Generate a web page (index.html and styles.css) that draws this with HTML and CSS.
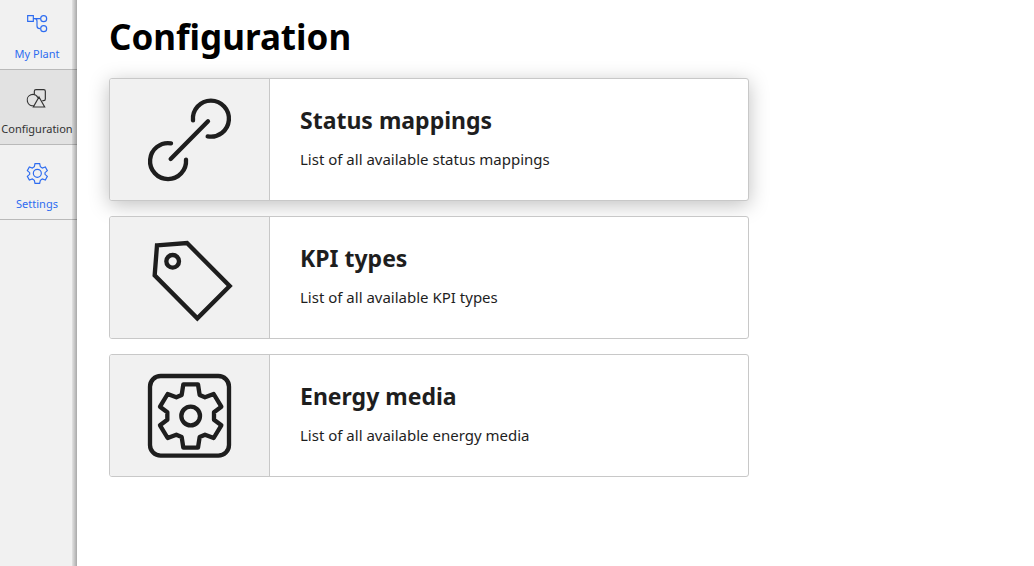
FILE: index.html
```html
<!DOCTYPE html>
<html lang="en">
<head>
<meta charset="utf-8">
<meta name="viewport" content="width=device-width, initial-scale=1">
<title>Configuration</title>
<link rel="stylesheet" href="styles.css">
</head>
<body>
<div class="app">
  <nav class="sidebar" aria-label="Main">
    <a class="nav-item" href="#plant">
      <svg class="nav-icon" viewBox="75 36 72 72" aria-hidden="true"><path d="M83 47h17v17H83zM101 56h20M104 56q7 0 7 8v14q0 8 9 8"/><circle cx="131" cy="56" r="9"/><circle cx="131" cy="86" r="9"/></svg>
      <span>My Plant</span>
    </a>
    <a class="nav-item active" href="#configuration" aria-current="page">
      <svg class="nav-icon" viewBox="75 261 72 72" aria-hidden="true"><path d="M117 291l17 30h-34zM103 282v-8q0-5 5-5h23q5 0 5 5v23q0 5-5 5h-4M102 317a17 17 0 1 1 12-24"/></svg>
      <span>Configuration</span>
    </a>
    <a class="nav-item" href="#settings">
      <svg class="nav-icon" viewBox="75 156 72 72" aria-hidden="true"><path d="M105 161h14l2 9 6 4 9-3 6 11-7 6v5l7 6-6 11-9-3-6 4-2 9h-14l-2-9-6-4-9 3-6-11 7-6v-5l-7-6 6-11 9 3 6-4z"/><circle cx="112" cy="190" r="12"/></svg>
      <span>Settings</span>
    </a>
  </nav>
  <main class="content">
    <h1 class="title">Configuration</h1>
    <div class="cards">
      <a class="card raised" href="#status-mappings">
        <span class="card-media"><svg class="card-icon" viewBox="111 51 285 285" aria-hidden="true"><path d="M197 252L309 139M264 136A54 54 0 1 1 308 184M198 205A54 54 0 1 0 243 254"/></svg></span>
        <span class="card-body"><strong class="card-title">Status mappings</strong><span class="card-text">List of all available status mappings</span></span>
      </a>
      <a class="card" href="#kpi-types">
        <span class="card-media"><svg class="card-icon mitered" viewBox="111 60 285 285" aria-hidden="true"><path d="M156 106l90-7 128 129-97 97-128-129z"/><circle cx="203" cy="154" r="19"/></svg></span>
        <span class="card-body"><strong class="card-title">KPI types</strong><span class="card-text">List of all available KPI types</span></span>
      </a>
      <a class="card" href="#energy-media">
        <span class="card-media"><svg class="card-icon" viewBox="111 54 285 285" aria-hidden="true"><rect x="135" y="78" width="237" height="239" rx="32"/><path d="M235 103H279L284 135L300 142L326 132L349 170L327 187V209L349 226L326 264L300 254L284 261L279 293H235L230 261L214 254L188 264L165 226L187 209V187L165 170L188 132L214 142L230 135Z"/><circle cx="257" cy="198" r="28"/></svg></span>
        <span class="card-body"><strong class="card-title">Energy media</strong><span class="card-text">List of all available energy media</span></span>
      </a>
    </div>
  </main>
</div>
</body>
</html>
```
FILE: styles.css
```css
* {
  box-sizing: border-box;
}

body {
  margin: 0;
  background: #fff;
  color: #1e1e1e;
  font-family: "Noto Sans", "Open Sans", sans-serif;
}

a {
  color: inherit;
  text-decoration: none;
}

svg {
  fill: none;
  stroke: currentColor;
}

.app {
  display: flex;
  min-height: 100vh;
}

.sidebar {
  position: relative;
  flex: none;
  width: 77px;
  background: #f1f1f1;
}

.sidebar::after {
  content: "";
  position: absolute;
  inset: 0 0 0 auto;
  width: 5px;
  background: linear-gradient(to right, rgba(0, 0, 0, 0.06), rgba(0, 0, 0, 0.3));
}

.nav-item {
  display: flex;
  flex-direction: column;
  align-items: center;
  gap: 10px;
  height: 75px;
  padding: 17px 3px 0 0;
  border-bottom: 1px solid #b9b9b9;
  color: #2d6cf0;
  font-size: 11px;
  line-height: 16px;
}

.nav-item:first-child {
  height: 70px;
  padding-top: 12px;
}

.nav-item.active {
  background: #e2e2e2;
  color: #333;
}

.nav-icon {
  width: 24px;
  height: 24px;
  stroke-width: 3.5;
}

.content {
  flex: 1;
  padding: 12px 32px;
}

.title {
  margin: 0 0 16px;
  color: #000;
  font-size: 35px;
  line-height: 50px;
}

.cards {
  display: grid;
  gap: 15px;
  max-width: 640px;
}

.card {
  display: flex;
  min-height: 123px;
  border: 1px solid #c8c8c8;
  border-radius: 3px;
  background: #fff;
  overflow: hidden;
}

.card.raised {
  box-shadow: 0 4px 20px rgba(0, 0, 0, 0.25);
}

.card-media {
  display: flex;
  flex: none;
  align-items: center;
  justify-content: center;
  width: 160px;
  border-right: 1px solid #c8c8c8;
  background: #f1f1f1;
}

.card-icon {
  width: 95px;
  height: 95px;
  stroke-width: 13;
  stroke-linecap: round;
  stroke-linejoin: round;
}

.card-icon.mitered {
  stroke-linejoin: miter;
}

.card-body {
  display: flex;
  flex-direction: column;
  gap: 11px;
  padding: 25px 30px;
}

.card-title {
  font-size: 23px;
  line-height: 32px;
}

.card-text {
  font-size: 15px;
  line-height: 24px;
}
```
